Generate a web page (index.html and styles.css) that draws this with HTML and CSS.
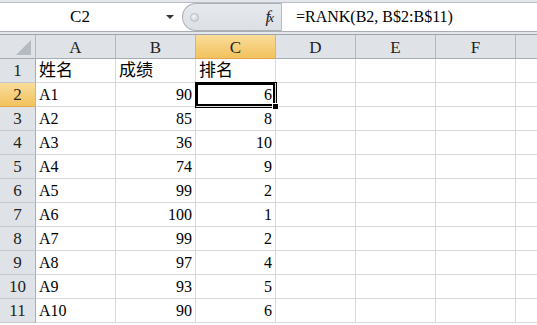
FILE: index.html
```html
<!DOCTYPE html>
<html lang="zh">
<head>
  <meta charset="UTF-8" />
  <title>RANK</title>
  <link rel="stylesheet" href="styles.css">
</head>
<body>

<div class="ribbon-edge"></div>
<div class="formula-bar">
  <div class="name-box">
    <span class="name-text">C2</span>
    <span class="name-arrow"></span>
  </div>
  <div class="grip">
    <span class="grip-dot"></span>
    <span class="fx"><i>f</i><i class="x">x</i></span>
  </div>
  <div class="formula-input">=RANK(B2, B$2:B$11)</div>
</div>
<div class="bar-gap"></div>

<div class="sheet" id="sheet"></div>

<script>
  const cols = ["A", "B", "C", "D", "E", "F", ""];
  const rows = [
    ["姓名", "成绩", "排名"],
    ["A1", 90, 6], ["A2", 85, 8], ["A3", 36, 10], ["A4", 74, 9],
    ["A5", 99, 2], ["A6", 100, 1], ["A7", 99, 2], ["A8", 97, 4],
    ["A9", 93, 5], ["A10", 90, 6]
  ];
  const active = { row: 2, col: 2 };

  function cell(cls, text) {
    const d = document.createElement("div");
    d.className = cls;
    if (text !== undefined) d.textContent = text;
    return d;
  }

  function buildSheet() {
    const sheet = document.getElementById("sheet");
    const head = cell("row head-row");
    head.appendChild(cell("corner")).appendChild(cell("corner-tri"));
    cols.forEach((c, i) => {
      const h = cell("col-head", c);
      if (i === active.col) h.classList.add("sel");
      head.appendChild(h);
    });
    sheet.appendChild(head);

    rows.forEach((r, ri) => {
      const row = cell("row");
      const rh = cell("row-head", ri + 1);
      if (ri + 1 === active.row) rh.classList.add("sel");
      row.appendChild(rh);
      cols.forEach((_, ci) => {
        const v = r[ci];
        const c = cell("cell", v === undefined ? "" : v);
        if (typeof v === "number") c.classList.add("num");
        if (ri === 0) c.classList.add("cjk");
        if (ri + 1 === active.row && ci === active.col) {
          c.classList.add("active");
          c.appendChild(cell("handle"));
        }
        row.appendChild(c);
      });
      sheet.appendChild(row);
    });
  }

  buildSheet();
</script>

</body>
</html>
```

FILE: styles.css
```css
html, body {
  margin: 0; padding: 0;
  width: 537px; height: 325px; overflow: hidden;
  background: #fff;
  font-family: "Liberation Serif", "Noto Sans CJK SC", serif;
  color: #000;
}

.ribbon-edge {
  height: 2px; background: #e3e6ea;
  border-bottom: 1px solid #b9bec5;
}

.formula-bar {
  display: flex; height: 28px;
  border-bottom: 1px solid #a8adb4;
}

.name-box {
  width: 182px; display: flex; align-items: center;
  background: #fff;
}
.name-text {
  width: 160px; text-align: center; font-size: 17px;
}
.name-arrow {
  margin-left: 6px;
  border-left: 4px solid transparent;
  border-right: 4px solid transparent;
  border-top: 4px solid #333;
}

.grip {
  width: 100px; box-sizing: border-box;
  display: flex; align-items: center; justify-content: space-between;
  background: linear-gradient(#e6e9ed, #dcdfe4);
  border: 1px solid #a9b0b8; border-right-color: #b7bcc3;
  border-radius: 14px 0 0 14px;
  padding: 0 5px 0 7px;
}
.grip-dot {
  width: 7px; height: 7px; border-radius: 50%;
  background: radial-gradient(circle at 40% 35%, #f4f5f7, #c3c8ce);
  border: 1px solid #b9bec5;
}
.fx {
  font-family: "Liberation Serif", serif; font-size: 17px;
  color: #222; letter-spacing: -2px;
  padding-right: 4px;
}
.fx .x { font-size: 13px; }

.formula-input {
  flex: 1; display: flex; align-items: center;
  padding-left: 14px; font-size: 16px;
}

.bar-gap {
  height: 2px; background: #e4e7eb;
  border-bottom: 1px solid #9ea4ac;
}

.row { display: flex; }

.head-row > div {
  height: 24px; box-sizing: border-box;
  background: #dfe3e8;
  border-right: 1px solid #b3b8bf; border-bottom: 1px solid #a6acb4;
  display: flex; align-items: center; justify-content: center;
  font-size: 17px; color: #222;
}
.corner { width: 36px; flex: none; position: relative; }
.corner-tri {
  position: absolute; right: 4px; bottom: 3px;
  width: 0; height: 0;
  border-left: 15px solid transparent;
  border-bottom: 15px solid #b6bbc2;
}
.col-head { width: 80px; flex: none; padding-top: 2px; }
.col-head:last-child { width: 21px; border-right: none !important; }

.row-head {
  width: 36px; height: 24px; flex: none; box-sizing: border-box;
  background: #dfe3e8;
  border-right: 1px solid #a6acb4; border-bottom: 1px solid #c4c8ce;
  display: flex; align-items: flex-end; justify-content: center;
  font-size: 17px; line-height: 22px; color: #222;
}

.sel {
  background: linear-gradient(#f9dc9b, #f2c25d) !important;
  border-bottom-color: #e3a64a !important;
  border-right-color: #e8b35c !important;
}

.cell {
  width: 80px; height: 24px; flex: none; box-sizing: border-box;
  border-right: 1px solid #d8d9db; border-bottom: 1px solid #d8d9db;
  padding: 0 3px; font-size: 16px; line-height: 23px;
  white-space: nowrap; overflow: hidden; position: relative;
}
.cell.cjk { font-size: 17px; }
.cell:last-child { width: 21px; border-right: none; }
.cell.num { text-align: right; }

.cell.active {
  overflow: visible;
  box-shadow: inset 0 0 0 2px #000;
  outline: 1px solid #000; outline-offset: 0;
  z-index: 1;
}
.handle {
  position: absolute; right: -4px; bottom: -4px;
  width: 5px; height: 5px; background: #000;
  border: 1px solid #fff;
}
```
